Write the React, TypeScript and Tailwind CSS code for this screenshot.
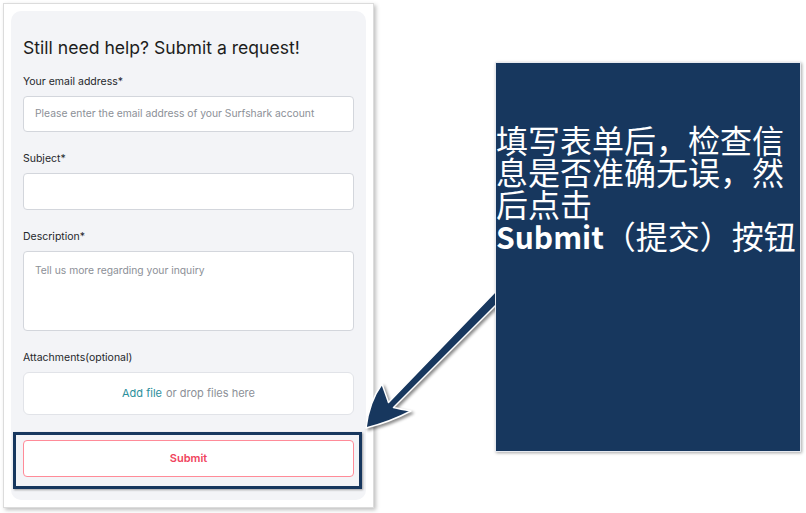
import React from 'react';

const formFont = { fontFamily: 'Inter, "Open Sans", sans-serif' };

const Field: React.FC<{ label: string; className?: string; children: React.ReactNode }> = ({ label, className = '', children }) => (
  <div className={className}>
    <div className="text-[10.5px] leading-[14px] text-[#25272b]">{label}</div>
    <div className="mt-[7px]">{children}</div>
  </div>
);

export default function App() {
  return (
    <div className="relative flex w-[806px] h-[513px] bg-white overflow-hidden" style={formFont}>
      {/* Form panel */}
      <div className="ml-[3px] mt-[3px] w-[371px] h-[505px] bg-white border border-[#dcdcdc] shadow-[2px_2px_4px_rgba(0,0,0,0.25)] p-[7px]">
        <div className="relative h-full rounded-[10px] bg-[#f3f4f7] px-[12px] pt-[28px]">
          <h2 className="text-[17.6px] leading-[18px] text-[#1c1d20]">Still need help? Submit a request!</h2>

          <Field label="Your email address*" className="mt-[18px]">
            <div className="h-[36px] rounded-[4px] border border-[#d3d6dc] bg-white flex items-center px-[11px] text-[10.3px] text-[#8c9097]">
              Please enter the email address of your Surfshark account
            </div>
          </Field>

          <Field label="Subject*" className="mt-[20px]">
            <div className="h-[37px] rounded-[4px] border border-[#d3d6dc] bg-white" />
          </Field>

          <Field label="Description*" className="mt-[20px]">
            <div className="h-[80px] rounded-[4px] border border-[#d3d6dc] bg-white px-[11px] pt-[11px] text-[10.3px] leading-[14px] text-[#8c9097]">
              Tell us more regarding your inquiry
            </div>
          </Field>

          <Field label="Attachments(optional)" className="mt-[20px]">
            <div className="h-[43px] rounded-[6px] border border-[#e1e3e8] bg-white flex items-center justify-center text-[11px] text-[#8c9097]">
              <span className="text-[#2b8f9c]">Add file</span>
              <span className="ml-[4px]">or drop files here</span>
            </div>
          </Field>

          <button className="mt-[25px] w-full h-[37px] rounded-[4px] border border-[#ff8b98] bg-white text-[11px] font-semibold text-[#f0435d]">
            Submit
          </button>

          {/* highlight frame */}
          <div className="absolute left-[2px] right-[4px] top-[421px] h-[57px] border-[3px] border-[#17375e] shadow-[1px_1px_2px_rgba(0,0,0,0.35)]" />
        </div>
      </div>

      {/* Arrow */}
      <svg className="absolute inset-0 pointer-events-none drop-shadow-[2px_2px_1.5px_rgba(0,0,0,0.45)]" width="806" height="513" viewBox="0 0 806 513">
        <path
          d="M 495.5 291.5 L 388.5 402.5 Q 386 395 382 384 Q 369 402 366 428 Q 390 422 411 411 Q 400 409 393.5 407.5 L 502 299 Z"
          fill="#17375e"
          stroke="#ffffff"
          strokeWidth="1.5"
          strokeLinejoin="round"
        />
      </svg>

      {/* Callout */}
      <div className="relative ml-[121px] mt-[62px] w-[306px] h-[390px] bg-[#17375e] border border-[#e6e9ef] shadow-[1px_1px_3px_rgba(0,0,0,0.35)] pt-[60px]">
        <div
          className="text-white text-[32px] leading-[32px] whitespace-nowrap"
          style={{ fontFamily: '"Noto Sans CJK SC", "Noto Sans", sans-serif' }}
        >
          <div>填写表单后，检查信</div>
          <div>息是否准确无误，然</div>
          <div>后点击</div>
          <div>
            <span className="font-semibold text-[30px]">Submit</span>（提交）按钮
          </div>
        </div>
      </div>
    </div>
  );
}
